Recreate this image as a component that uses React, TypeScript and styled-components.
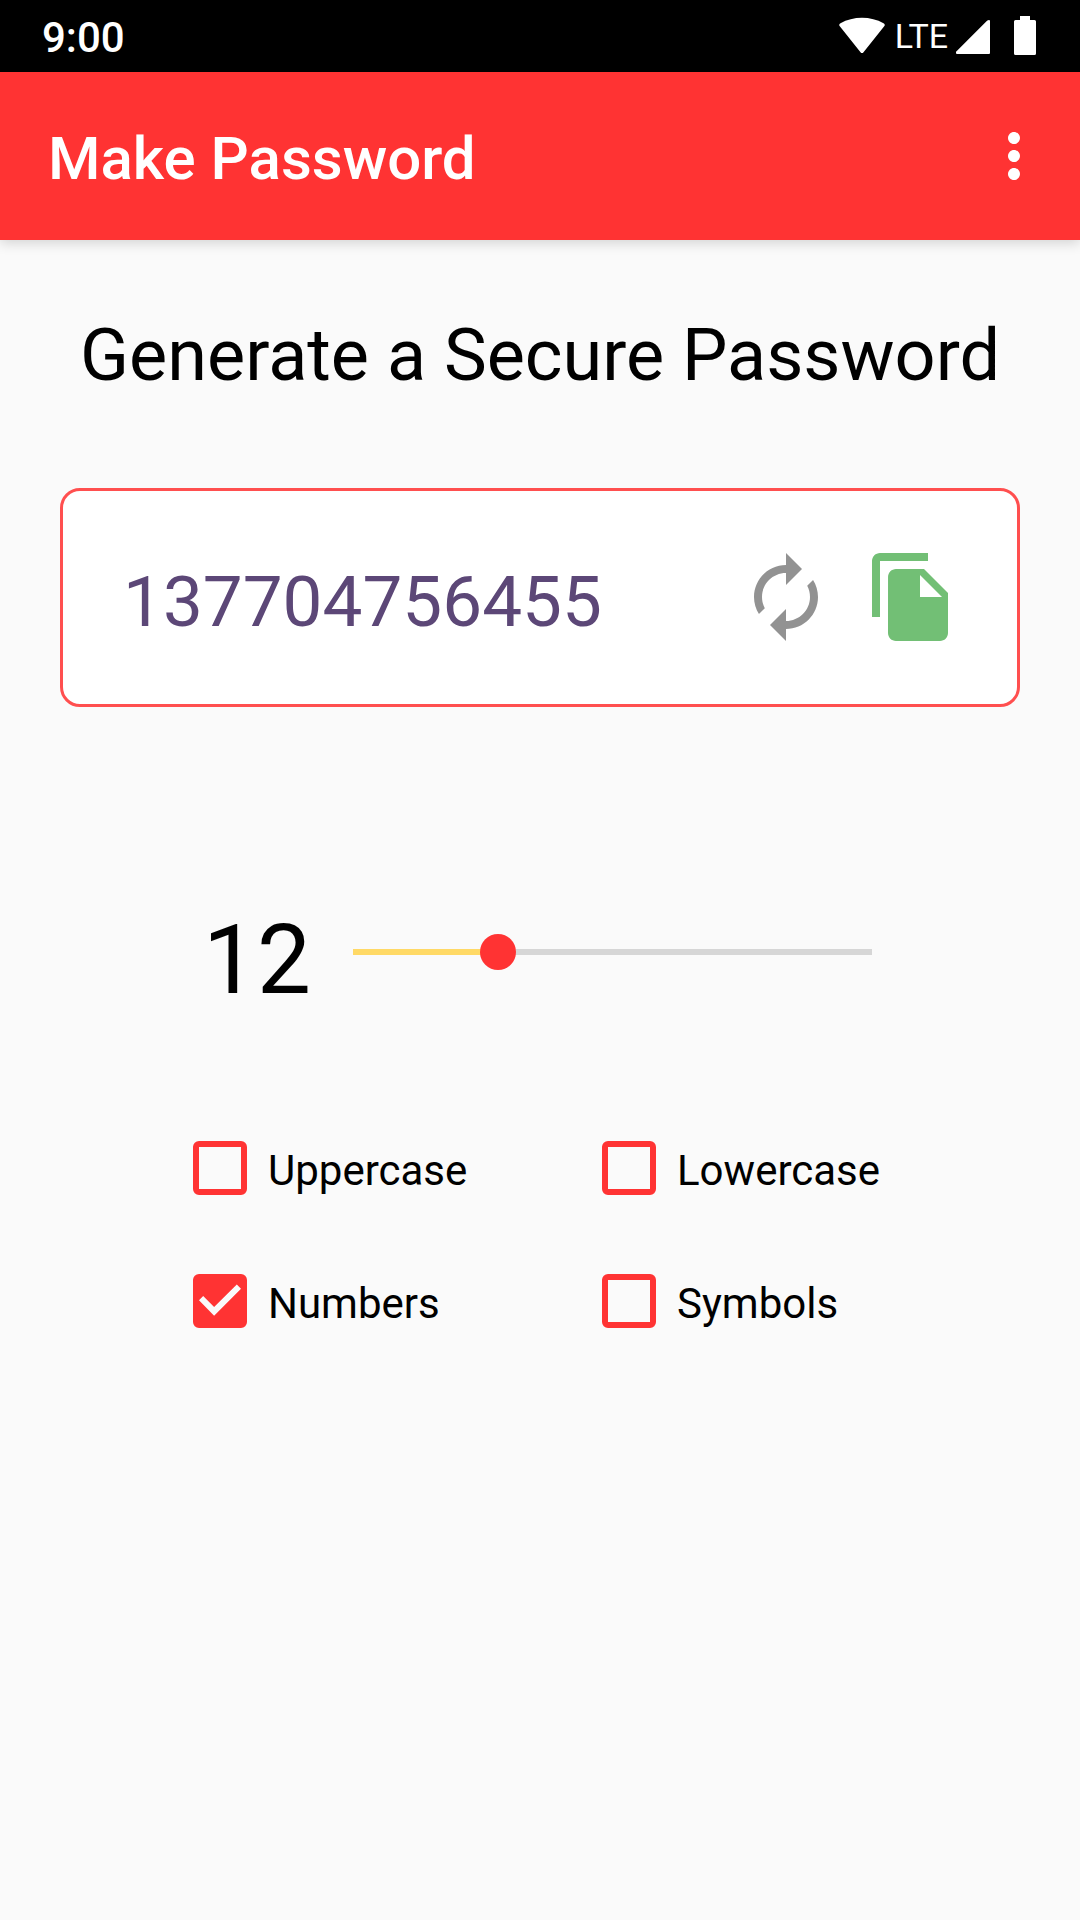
import React, { useState } from "react";
import styled, { createGlobalStyle } from "styled-components";

const GlobalStyle = createGlobalStyle`
  *, *::before, *::after { box-sizing: border-box; }
  body {
    margin: 0;
    background: #fafafa;
    color: #000;
    font-family: Roboto, "Noto Sans", sans-serif;
  }
`;

const Screen = styled.div`
  min-height: 100vh;
  display: flex;
  flex-direction: column;
`;

const StatusBar = styled.div`
  display: flex;
  align-items: center;
  justify-content: space-between;
  height: 72px;
  padding: 0 36px 0 42px;
  background: #000;
  color: #fff;
`;

const Clock = styled.time`
  padding-top: 3px;
  font-size: 42px;
  font-weight: 500;
  line-height: 48px;
`;

const StatusIcons = styled.div`
  display: flex;
  align-items: center;
  color: #fff;
`;

const Network = styled.span`
  margin: 0 8px 0 10px;
  font-size: 34px;
  line-height: 48px;
`;

const AppBar = styled.header`
  display: flex;
  align-items: center;
  justify-content: space-between;
  height: 168px;
  padding: 0 30px 0 48px;
  background: #ff3333;
  color: #fff;
  box-shadow: 0 3px 12px rgba(0, 0, 0, 0.16);
`;

const Title = styled.h1`
  margin: 0;
  padding-top: 5px;
  font-size: 60px;
  font-weight: 500;
  line-height: 72px;
`;

const IconButton = styled.button<{ $tint: string; $size: number }>`
  display: flex;
  flex: none;
  padding: 0;
  border: 0;
  background: none;
  color: ${(p) => p.$tint};
  cursor: pointer;

  svg {
    width: ${(p) => p.$size}px;
    height: ${(p) => p.$size}px;
    fill: currentColor;
  }
`;

const Content = styled.main`
  display: flex;
  flex-direction: column;
  padding: 74px 60px;
`;

const Heading = styled.h2`
  margin: 0;
  font-size: 72px;
  font-weight: 400;
  line-height: 84px;
  text-align: center;
`;

const PasswordCard = styled.section`
  display: flex;
  align-items: center;
  gap: 30px;
  margin-top: 90px;
  padding: 58px 57px 59px 60px;
  border: 3px solid #ff4f4f;
  border-radius: 20px;
  background: #fff;
`;

const Password = styled.output`
  flex: 1;
  min-width: 0;
  padding-top: 10px;
  color: #5c4777;
  font-size: 71px;
  line-height: 84px;
`;

const LengthRow = styled.div`
  display: flex;
  align-items: flex-start;
  margin-top: 197px;
  padding: 0 130px 0 143px;
  gap: 24px;
`;

const LengthLabel = styled.label`
  font-size: 96px;
  line-height: 112px;
`;

const Slider = styled.input`
  flex: 1;
  min-width: 0;
  height: 96px;
  margin: 0;
  appearance: none;
  background: none;

  &::-webkit-slider-runnable-track {
    height: 6px;
    background: linear-gradient(to right, #ffd966 var(--filled), #d6d6d6 var(--filled))
      center / calc(100% - 36px) 100% no-repeat;
  }

  &::-webkit-slider-thumb {
    appearance: none;
    width: 36px;
    height: 36px;
    margin-top: -15px;
    border-radius: 50%;
    background: #ff3333;
  }
`;

const Options = styled.fieldset`
  display: grid;
  grid-template-columns: 1fr 1fr;
  row-gap: 61px;
  margin: 116px 0 0;
  padding: 0 9px 0 133px;
  border: 0;
`;

const Option = styled.label`
  display: flex;
  align-items: center;
  gap: 21px;
  height: 72px;
  font-size: 42px;
  line-height: 48px;
`;

const OptionText = styled.span`
  padding-top: 6px;
`;

const CheckBox = styled.input`
  appearance: none;
  flex: none;
  width: 54px;
  height: 54px;
  margin: 0;
  border: 6px solid #ff3333;
  border-radius: 6px;

  &:checked {
    background: #ff3333;
  }

  &:checked::before {
    content: "";
    display: block;
    width: 42px;
    height: 42px;
    background: #fafafa;
    clip-path: polygon(0 48%, 10% 38%, 36% 64%, 90% 11%, 100% 21%, 36% 85%);
  }
`;

const MAX_LENGTH = 43;
const OPTIONS = ["Uppercase", "Lowercase", "Numbers", "Symbols"];

export default function App() {
  const [length, setLength] = useState(12);
  const [enabled, setEnabled] = useState<string[]>(["Numbers"]);

  const toggle = (name: string) =>
    setEnabled((now) => (now.includes(name) ? now.filter((n) => n !== name) : [...now, name]));

  return (
    <Screen>
      <GlobalStyle />
      <StatusBar>
        <Clock>9:00</Clock>
        <StatusIcons>
          <svg width="46" height="38" viewBox="0 0 46 38" fill="currentColor" aria-hidden="true">
            <path d="M1 9.500C-.2 8.300 0 7 1.500 6.200C14-1.200 32-1.200 44.500 6.200C46 7 46.200 8.300 45 9.500L24.500 35.200Q23 37 21.500 35.200Z" />
          </svg>
          <Network>LTE</Network>
          <svg width="34" height="36" viewBox="0 -2 34 36" fill="currentColor" aria-hidden="true">
            <path d="M31 .8Q32 0 33 0Q34 0 34 1V33Q34 34 33 34H1Q0 34 0 33V32Q0 31.500 .8 31Z" />
          </svg>
          <svg width="54" height="40" viewBox="0 0 54 40" fill="currentColor" aria-hidden="true">
            <path d="M30 0H40V4H44.500Q46 4 46 5.500V37.500Q46 39 44.500 39H25.500Q24 39 24 37.500V5.500Q24 4 25.500 4H30Z" />
          </svg>
        </StatusIcons>
      </StatusBar>
      <AppBar>
        <Title>Make Password</Title>
        <IconButton $tint="#fff" $size={72} type="button" aria-label="More options">
          <svg viewBox="0 0 24 24">
            <path d="M12 8c1.100 0 2-.9 2-2s-.9-2-2-2-2 .9-2 2 .9 2 2 2zm0 2c-1.100 0-2 .9-2 2s.9 2 2 2 2-.9 2-2-.9-2-2-2zm0 6c-1.100 0-2 .9-2 2s.9 2 2 2 2-.9 2-2-.9-2-2-2z" />
          </svg>
        </IconButton>
      </AppBar>
      <Content>
        <Heading>Generate a Secure Password</Heading>
        <PasswordCard>
          <Password>137704756455</Password>
          <IconButton $tint="#929292" $size={96} type="button" aria-label="Generate again">
            <svg viewBox="0 0 24 24">
              <path d="M12 6v3l4-4-4-4v3c-4.420 0-8 3.580-8 8 0 1.570.46 3.030 1.240 4.260L6.700 14.800c-.45-.83-.7-1.790-.7-2.800 0-3.310 2.690-6 6-6zm6.760 1.740L17.300 9.200c.44.840.7 1.790.7 2.800 0 3.310-2.690 6-6 6v-3l-4 4 4 4v-3c4.420 0 8-3.580 8-8 0-1.570-.46-3.030-1.240-4.260z" />
            </svg>
          </IconButton>
          <IconButton $tint="#72bf75" $size={96} type="button" aria-label="Copy password">
            <svg viewBox="0 0 24 24">
              <path d="M16 1H4c-1.100 0-2 .9-2 2v14h2V3h12V1zm-1 4l6 6v10c0 1.100-.9 2-2 2H7.990C6.890 23 6 22.100 6 21l.010-14c0-1.100.89-2 1.990-2h7zm-1 7h5.500L14 6.500V12z" />
            </svg>
          </IconButton>
        </PasswordCard>
        <LengthRow>
          <LengthLabel htmlFor="length">{length}</LengthLabel>
          <Slider
            id="length"
            type="range"
            min={0}
            max={MAX_LENGTH}
            value={length}
            onChange={(e) => setLength(Number(e.target.value))}
            style={{ "--filled": `${(length / MAX_LENGTH) * 100}%` } as React.CSSProperties}
          />
        </LengthRow>
        <Options aria-label="Characters to use">
          {OPTIONS.map((name) => (
            <Option key={name}>
              <CheckBox type="checkbox" checked={enabled.includes(name)} onChange={() => toggle(name)} />
              <OptionText>{name}</OptionText>
            </Option>
          ))}
        </Options>
      </Content>
    </Screen>
  );
}
